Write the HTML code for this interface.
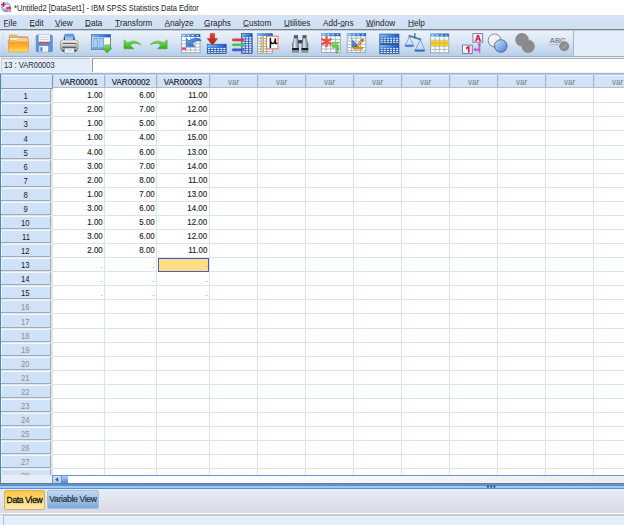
<!DOCTYPE html><html><head><meta charset="utf-8"><style>
*{margin:0;padding:0;box-sizing:border-box}
html,body{width:624px;height:525px;overflow:hidden;background:#fff;font-family:"Liberation Sans",sans-serif;}
.a{position:absolute}
#title{left:0;top:0;width:624px;height:15px;background:#fff}
#ttext{left:14px;top:2.5px;font-size:8.4px;color:#222;white-space:nowrap;transform:scaleX(0.9);transform-origin:0 50%}
#menu{left:0;top:15px;width:624px;height:15px;background:linear-gradient(#d6e5f6,#cddff3);border-bottom:1px solid #77828e}
.mi{font-size:8.2px;color:#1e1e1e;white-space:nowrap}
#tbarea{left:0;top:30px;width:624px;height:27px;background:#e4eefa;border-bottom:1px solid #a3afbb;border-top:1px solid #c8ccd2}
#tb{left:0;top:31px;width:574px;height:25px;background:linear-gradient(#ebf2fa,#dbe7f5 40%,#b7cee9);border-right:1px solid #aab8c6}
.mi u{text-decoration:none;position:relative}
.mi u::after{content:"";position:absolute;left:0;right:0;top:7.5px;height:1px;background:#7a8088}
#refrow{left:0;top:57px;width:624px;height:16px;background:#e8f0fa}
#refbox{left:1px;top:58px;width:89px;height:14px;background:#e3edf9;border-top:1px solid #b9c2cc;border-left:1px solid #c9d2dc}
#reftext{left:4px;top:60px;font-size:8.6px;color:#2a2a2a;white-space:nowrap;transform:scaleX(0.88);transform-origin:0 50%}
#valbox{left:92px;top:58px;width:532px;height:14px;background:#fff;border-top:1px solid #a8b0b8;border-left:1px solid #8e969e}
#blueline{left:0;top:73px;width:624px;height:2px;background:linear-gradient(#8fb3dd,#bcd4ee)}
#leftbar{left:0;top:74px;width:1px;height:411px;background:#4a86c8}
#gridbg{left:1px;top:75px;width:623px;height:400px;background:#fff}
.hc{background:#d2e3f8;border-right:1px solid #a9b1bb;border-bottom:1px solid #b4bcc6;box-shadow:inset 1px 0 0 #d0d7df,inset 0 1px 0 #e9f1fb;text-align:center;color:#1e1e1e;-webkit-text-stroke:0.2px #1e1e1e;font-size:9.6px;line-height:12px;padding-top:1px;white-space:nowrap}
.hc span{display:inline-block;transform:scaleX(0.84)}
.hv{color:#7c7c7c;-webkit-text-stroke:0}
.rh{background:#d0e2f8;border-right:1px solid #a0aab6;border-bottom:1px solid #a0aab6;box-shadow:inset 1px 1px 0 #f2f7fd;text-align:center;color:#1a1a1a;font-size:9.6px}
.rh span{display:inline-block;transform:translateY(0.5px) scaleX(0.8)}
.rhg{color:#8c8c8c}
.gl{background:#d6e4f3}
.rgl{background:#dfe6ee}
.dt{font-size:9.6px;color:#1e1e1e;-webkit-text-stroke:0.15px #1e1e1e;text-align:right;white-space:nowrap;transform:scaleX(0.82);transform-origin:100% 50%;line-height:12px}
.dot{color:#8a8a8a;-webkit-text-stroke:0}
#sel{background:#fddf88;border:1px solid #5558b8}
#hscroll{left:1px;top:475px;width:623px;height:8px;background:linear-gradient(to right,#fff,#fcfcfd 40%,#ededf1);border-top:1px solid #5e9ad8}
#hsleft{left:1px;top:475px;width:52px;height:8px;background:#e6edf6}
#sbtn{left:52px;top:475px;width:10px;height:9px;background:linear-gradient(#cfe2f8,#aecdf2);border:1px solid #5c9ce6}
#sthumb{left:62px;top:475px;width:6px;height:9px;background:linear-gradient(#b4d2f2,#3c7cd2);border-top:1px solid #5c9ce6}
#splitter{left:0;top:483px;width:624px;height:6px;background:linear-gradient(#6c7c8e 0,#6c7c8e 16.6%,#5c92d0 16.6%,#5c92d0 50%,#9ccaf2 50%,#9ccaf2 83.3%,#5e90c8 83.3%)}
#tabs{left:0;top:489px;width:624px;height:25px;background:linear-gradient(#e6eef8,#dad9e5);border-bottom:1px solid #fff}
#tab1{left:4px;top:490px;width:41px;height:20px;background:linear-gradient(#ffc640,#ffe08a 60%,#feeab0);border:1px solid #d4b060;border-radius:2px;font-size:8.5px;color:#111;-webkit-text-stroke:0.3px #111;text-align:center;line-height:19px;letter-spacing:-0.3px;white-space:nowrap}
#tab2{left:47px;top:490px;width:52px;height:19px;background:linear-gradient(#c4d8f0,#7eaad8);border:1px solid #a4c0e0;border-radius:2px;font-size:8.5px;color:#2a3446;-webkit-text-stroke:0.2px #2a3446;text-align:center;line-height:17px;letter-spacing:-0.3px;white-space:nowrap}
#status{left:0;top:514px;width:624px;height:11px;background:#e2eefb;border-top:1px solid #c2c8d0}
#statbox{left:3px;top:515px;width:621px;height:10px;border-top:1px solid #c4ccd6;border-left:1px solid #b8c0ca;background:#e2eefa}
</style></head><body><div class="a" id="title"></div>
<svg class="a" style="left:0;top:0" width="14" height="14" viewBox="0 0 14 14">
<defs><radialGradient id="gIc" cx="0.45" cy="0.4" r="0.6"><stop offset="0" stop-color="#e8f2fc"/><stop offset="0.55" stop-color="#9cc4ec"/><stop offset="1" stop-color="#3a7cc8"/></radialGradient></defs>
<circle cx="6" cy="7.1" r="4.9" fill="url(#gIc)"/>
<path d="M2.6 8.6Q5 5 9.6 5.6" stroke="#ffffff" stroke-width="1.1" fill="none" opacity="0.8"/>
<rect x="1.1" y="3.9" width="4.7" height="1.3" fill="#e0143c"/><rect x="2.8" y="2" width="1.3" height="5" fill="#e0143c"/>
<rect x="6.5" y="7.3" width="4.5" height="4.5" fill="#e46a82"/><rect x="6.5" y="7.3" width="4.5" height="1.4" fill="#d8203c"/>
<path d="M6.5 10.2h4.5M8.7 8.7v3.1" stroke="#f8c8d0" stroke-width="0.5"/>
</svg>
<div class="a" id="ttext">*Untitled2 [DataSet1] - IBM SPSS Statistics Data Editor</div>
<div class="a" id="menu"></div>
<div class="a mi" style="left:3.6px;top:18.5px"><u>F</u>ile</div>
<div class="a mi" style="left:29.5px;top:18.5px"><u>E</u>dit</div>
<div class="a mi" style="left:55px;top:18.5px"><u>V</u>iew</div>
<div class="a mi" style="left:85px;top:18.5px"><u>D</u>ata</div>
<div class="a mi" style="left:115px;top:18.5px"><u>T</u>ransform</div>
<div class="a mi" style="left:164.5px;top:18.5px"><u>A</u>nalyze</div>
<div class="a mi" style="left:204px;top:18.5px"><u>G</u>raphs</div>
<div class="a mi" style="left:243px;top:18.5px"><u>C</u>ustom</div>
<div class="a mi" style="left:284px;top:18.5px"><u>U</u>tilities</div>
<div class="a mi" style="left:323px;top:18.5px">Add-<u>o</u>ns</div>
<div class="a mi" style="left:366px;top:18.5px"><u>W</u>indow</div>
<div class="a mi" style="left:408px;top:18.5px"><u>H</u>elp</div>
<div class="a" id="tbarea"></div>
<div class="a" id="tb"></div>
<svg class="a" style="left:0;top:0" width="624" height="60" viewBox="0 0 624 60"><defs>
<linearGradient id="gFold" x1="0" y1="0" x2="0" y2="1"><stop offset="0" stop-color="#fff4e0"/><stop offset="0.28" stop-color="#ff9a1e"/><stop offset="0.6" stop-color="#ffae2c"/><stop offset="1" stop-color="#fff27a"/></linearGradient>
<linearGradient id="gFoldB" x1="0" y1="0" x2="0" y2="1"><stop offset="0" stop-color="#ffd050"/><stop offset="1" stop-color="#e89010"/></linearGradient>
<linearGradient id="gGreen" x1="0" y1="0" x2="0" y2="1"><stop offset="0" stop-color="#80e45c"/><stop offset="1" stop-color="#34a820"/></linearGradient>
<linearGradient id="gRed" x1="0" y1="0" x2="0" y2="1"><stop offset="0" stop-color="#e04a30"/><stop offset="1" stop-color="#b01a10"/></linearGradient>
<linearGradient id="gPrn" x1="0" y1="0" x2="0" y2="1"><stop offset="0" stop-color="#f6f6f6"/><stop offset="0.5" stop-color="#cdcdcd"/><stop offset="1" stop-color="#8a8a8a"/></linearGradient>
<linearGradient id="gPap" x1="0" y1="0" x2="0" y2="1"><stop offset="0" stop-color="#3a8ae0"/><stop offset="1" stop-color="#e8f4ff"/></linearGradient>
<linearGradient id="gHdr" x1="0" y1="0" x2="0" y2="1"><stop offset="0" stop-color="#9ccaf6"/><stop offset="1" stop-color="#2a70d6"/></linearGradient>
<linearGradient id="gHdrH" x1="0" y1="0" x2="1" y2="0"><stop offset="0" stop-color="#7ab8f4"/><stop offset="1" stop-color="#1a5cc8"/></linearGradient>
<linearGradient id="gBin" x1="0" y1="0" x2="1" y2="0"><stop offset="0" stop-color="#50585e"/><stop offset="0.35" stop-color="#e4e8ec"/><stop offset="0.7" stop-color="#a0a8b0"/><stop offset="1" stop-color="#586068"/></linearGradient>
<linearGradient id="gCir" x1="0" y1="0" x2="1" y2="1"><stop offset="0" stop-color="#d0e2fc"/><stop offset="1" stop-color="#3a78e0"/></linearGradient>
<linearGradient id="gCirW" x1="0" y1="0" x2="1" y2="1"><stop offset="0" stop-color="#ffffff"/><stop offset="1" stop-color="#d8e0ec"/></linearGradient>
<linearGradient id="gPan" x1="0" y1="0" x2="0" y2="1"><stop offset="0" stop-color="#b8dcf8"/><stop offset="0.5" stop-color="#2a68c0"/><stop offset="1" stop-color="#a8d4f4"/></linearGradient>
<linearGradient id="gBlue" x1="0" y1="0" x2="1" y2="1"><stop offset="0" stop-color="#6aacf4"/><stop offset="1" stop-color="#1a56c0"/></linearGradient>
<linearGradient id="gBox" x1="0" y1="0" x2="1" y2="1"><stop offset="0" stop-color="#ffffff"/><stop offset="1" stop-color="#dfe4ec"/></linearGradient>
</defs><rect x="2.6" y="33" width="0.8" height="0.8" fill="#b0bccb"/><rect x="2.6" y="35" width="0.8" height="0.8" fill="#b0bccb"/><rect x="2.6" y="37" width="0.8" height="0.8" fill="#b0bccb"/><rect x="2.6" y="39" width="0.8" height="0.8" fill="#b0bccb"/><rect x="2.6" y="41" width="0.8" height="0.8" fill="#b0bccb"/><rect x="2.6" y="43" width="0.8" height="0.8" fill="#b0bccb"/><rect x="2.6" y="45" width="0.8" height="0.8" fill="#b0bccb"/><rect x="2.6" y="47" width="0.8" height="0.8" fill="#b0bccb"/><rect x="2.6" y="49" width="0.8" height="0.8" fill="#b0bccb"/><rect x="2.6" y="51" width="0.8" height="0.8" fill="#b0bccb"/><rect x="2.6" y="53" width="0.8" height="0.8" fill="#b0bccb"/><path d="M9.3 35.6q0-0.6 0.6-0.6h6.8l1.6 1.8h9.3v4.6H9.3z" fill="url(#gFoldB)" stroke="#d08a30" stroke-width="0.6"/><rect x="9.6" y="37.8" width="17.8" height="3.4" fill="#fbfdff" stroke="#5a8ad0" stroke-width="0.5"/><path d="M8.1 40.2h8.8l1.2-1.2h10.6l-0.5 12.8H8.9z" fill="url(#gFold)" stroke="#e08424" stroke-width="0.6"/><path d="M9.4 46Q15 41.2 22 43.6Q25 45 27.6 48.5V51.2H9.4z" fill="#ffc030" opacity="0.35"/><rect x="36.2" y="35" width="16.2" height="16.8" rx="1.4" fill="#5f94d4" stroke="#4a7ab4" stroke-width="0.5"/><rect x="38.6" y="35" width="11.4" height="7.6" fill="#f3f5f8"/><path d="M39.8 37.3h9M39.8 39.5h9" stroke="#c4c8d0" stroke-width="0.8"/><rect x="38.6" y="41.8" width="11.4" height="1.4" fill="#d8405a"/><rect x="39.2" y="46" width="9" height="5.8" fill="#eef0f3"/><rect x="40.4" y="47.2" width="2" height="4.2" fill="#4a80c4"/><path d="M64.4 41.4V35.4Q64.4 34.2 65.6 34.2H72.8Q74 34.2 74 35.4V41.4Z" fill="url(#gPap)" stroke="#3a74c4" stroke-width="0.5"/><rect x="63.8" y="37.2" width="1.2" height="4.2" fill="#1e3e74"/><rect x="73.4" y="37.2" width="1.2" height="4.2" fill="#1e3e74"/><rect x="60.6" y="40" width="17.4" height="10.8" rx="2.4" fill="url(#gPrn)" stroke="#6a6a6a" stroke-width="0.5"/><rect x="62.6" y="42.8" width="13.4" height="1.2" fill="#6a6a6a"/><rect x="62.6" y="46.6" width="13.4" height="1.4" fill="#5a5a5a"/><rect x="62.4" y="50" width="2.2" height="1.6" fill="#3a3a3a"/><rect x="74" y="50" width="2.2" height="1.6" fill="#3a3a3a"/><path d="M65 48.2h8.8l0.6 4.8H64.4z" fill="#eef6fe" stroke="#8aa4be" stroke-width="0.5"/><path d="M67 50.2h5" stroke="#9ab0c4" stroke-width="0.6"/><rect x="75.4" y="43.4" width="1.6" height="1.4" fill="#3cc03c"/><rect x="91.4" y="34.4" width="19.2" height="15.2" fill="#fff" stroke="#56669a" stroke-width="0.8"/><rect x="91.8" y="34.8" width="18.4" height="2.6" fill="url(#gHdrH)"/><rect x="93" y="38.2" width="4.6" height="9.6" fill="#a8d0f2" stroke="#4a90dc" stroke-width="0.7"/><rect x="99" y="38.2" width="4.6" height="9.6" fill="#a8d0f2" stroke="#4a90dc" stroke-width="0.7"/><rect x="92.2" y="47.6" width="12" height="1.6" fill="#6aa8ea"/><path d="M104.6 44.8h5v3.2h2.1l-4.6 5.1-4.6-5.1h2.1z" fill="url(#gGreen)" stroke="#2a9a1a" stroke-width="0.4"/><path d="M124 39.8L127.8 42.8Q134.6 38.4 141.2 44.8Q134.2 41.4 130.2 45.2L133.8 48.8H124Z" fill="url(#gGreen)" stroke="#3aa82a" stroke-width="0.5"/><path d="M124 39.8L127.8 42.8Q134.6 38.4 141.2 44.8Q134.2 41.4 130.2 45.2L133.8 48.8H124Z" transform="translate(291.2 0) scale(-1 1)" fill="url(#gGreen)" stroke="#3aa82a" stroke-width="0.5"/><rect x="181.4" y="34.2" width="18.6" height="18.6" fill="#fff" stroke="#7c8ca4" stroke-width="0.7"/><line x1="186.2" y1="37.0" x2="186.2" y2="52.800000000000004" stroke="#aab2bc" stroke-width="0.9"/><line x1="190.6" y1="37.0" x2="190.6" y2="52.800000000000004" stroke="#aab2bc" stroke-width="0.9"/><line x1="195.2" y1="37.0" x2="195.2" y2="52.800000000000004" stroke="#aab2bc" stroke-width="0.9"/><line x1="181.4" y1="40.4" x2="200.0" y2="40.4" stroke="#aab2bc" stroke-width="0.9"/><line x1="181.4" y1="43.8" x2="200.0" y2="43.8" stroke="#aab2bc" stroke-width="0.9"/><line x1="181.4" y1="47.2" x2="200.0" y2="47.2" stroke="#aab2bc" stroke-width="0.9"/><line x1="181.4" y1="50" x2="200.0" y2="50" stroke="#aab2bc" stroke-width="0.9"/><rect x="181.4" y="34.2" width="18.6" height="2.8" fill="url(#gHdrH)"/><path d="M182.5 35.1h2.4l-1.2 1.3z" fill="#fff" opacity="0.9"/><path d="M187.29999999999998 35.1h2.4l-1.2 1.3z" fill="#fff" opacity="0.9"/><path d="M191.7 35.1h2.4l-1.2 1.3z" fill="#fff" opacity="0.9"/><path d="M196.29999999999998 35.1h2.4l-1.2 1.3z" fill="#fff" opacity="0.9"/><rect x="182" y="47.6" width="4" height="2.2" fill="#ee4058"/><path d="M186.4 38.4L189 40.8Q194 36.8 199.2 38.6L201.2 40.6L198.8 40.8Q194.6 40.6 192.2 43.4L194.8 46.6H186.4Z" fill="url(#gBlue)" stroke="#1a4aa0" stroke-width="0.5"/><path d="M210.2 33.4h4.4v5.2h3l-5.2 6.6-5.2-6.6h3z" fill="url(#gRed)" stroke="#9a1a10" stroke-width="0.4"/><rect x="207.2" y="44.2" width="19" height="9.4" fill="#2a62c0" stroke="#34487a" stroke-width="0.6"/><rect x="207.5" y="44.5" width="18.4" height="3" fill="url(#gHdrH)"/><rect x="208.00" y="47.95" width="2.07" height="1.03" fill="#f4f8ff"/><rect x="208.00" y="49.88" width="2.07" height="1.03" fill="#f4f8ff"/><rect x="208.00" y="51.82" width="2.07" height="1.03" fill="#f4f8ff"/><rect x="211.07" y="47.95" width="2.07" height="1.03" fill="#f4f8ff"/><rect x="211.07" y="49.88" width="2.07" height="1.03" fill="#f4f8ff"/><rect x="211.07" y="51.82" width="2.07" height="1.03" fill="#f4f8ff"/><rect x="214.13" y="47.95" width="2.07" height="1.03" fill="#f4f8ff"/><rect x="214.13" y="49.88" width="2.07" height="1.03" fill="#f4f8ff"/><rect x="214.13" y="51.82" width="2.07" height="1.03" fill="#f4f8ff"/><rect x="217.20" y="47.95" width="2.07" height="1.03" fill="#f4f8ff"/><rect x="217.20" y="49.88" width="2.07" height="1.03" fill="#f4f8ff"/><rect x="217.20" y="51.82" width="2.07" height="1.03" fill="#f4f8ff"/><rect x="220.27" y="47.95" width="2.07" height="1.03" fill="#f4f8ff"/><rect x="220.27" y="49.88" width="2.07" height="1.03" fill="#f4f8ff"/><rect x="220.27" y="51.82" width="2.07" height="1.03" fill="#f4f8ff"/><rect x="223.33" y="47.95" width="2.07" height="1.03" fill="#f4f8ff"/><rect x="223.33" y="49.88" width="2.07" height="1.03" fill="#f4f8ff"/><rect x="223.33" y="51.82" width="2.07" height="1.03" fill="#f4f8ff"/><rect x="241.6" y="33.5" width="10.6" height="19.8" fill="#2a62c0" stroke="#34487a" stroke-width="0.6"/><rect x="241.9" y="33.8" width="10.0" height="2.8" fill="url(#gHdrH)"/><rect x="242.40" y="37.05" width="2.33" height="1.44" fill="#f4f8ff"/><rect x="242.40" y="39.39" width="2.33" height="1.44" fill="#f4f8ff"/><rect x="242.40" y="41.74" width="2.33" height="1.44" fill="#f4f8ff"/><rect x="242.40" y="44.08" width="2.33" height="1.44" fill="#f4f8ff"/><rect x="242.40" y="46.42" width="2.33" height="1.44" fill="#f4f8ff"/><rect x="242.40" y="48.76" width="2.33" height="1.44" fill="#f4f8ff"/><rect x="242.40" y="51.11" width="2.33" height="1.44" fill="#f4f8ff"/><rect x="245.73" y="37.05" width="2.33" height="1.44" fill="#f4f8ff"/><rect x="245.73" y="39.39" width="2.33" height="1.44" fill="#f4f8ff"/><rect x="245.73" y="41.74" width="2.33" height="1.44" fill="#f4f8ff"/><rect x="245.73" y="44.08" width="2.33" height="1.44" fill="#f4f8ff"/><rect x="245.73" y="46.42" width="2.33" height="1.44" fill="#f4f8ff"/><rect x="245.73" y="48.76" width="2.33" height="1.44" fill="#f4f8ff"/><rect x="245.73" y="51.11" width="2.33" height="1.44" fill="#f4f8ff"/><rect x="249.07" y="37.05" width="2.33" height="1.44" fill="#f4f8ff"/><rect x="249.07" y="39.39" width="2.33" height="1.44" fill="#f4f8ff"/><rect x="249.07" y="41.74" width="2.33" height="1.44" fill="#f4f8ff"/><rect x="249.07" y="44.08" width="2.33" height="1.44" fill="#f4f8ff"/><rect x="249.07" y="46.42" width="2.33" height="1.44" fill="#f4f8ff"/><rect x="249.07" y="48.76" width="2.33" height="1.44" fill="#f4f8ff"/><rect x="249.07" y="51.11" width="2.33" height="1.44" fill="#f4f8ff"/><rect x="232" y="38.6" width="12" height="2.6" rx="1.3" fill="#e03a50"/><rect x="232" y="43.4" width="12" height="2.6" rx="1.3" fill="#48c444"/><rect x="232" y="48.6" width="12" height="2.6" rx="1.3" fill="#4858d0"/><rect x="257.4" y="33.4" width="15.2" height="19.8" fill="#fff" stroke="#7c8ca4" stroke-width="0.7"/><line x1="261" y1="36.0" x2="261" y2="53.2" stroke="#98a4b4" stroke-width="0.9"/><line x1="263.4" y1="36.0" x2="263.4" y2="53.2" stroke="#98a4b4" stroke-width="0.9"/><line x1="266.6" y1="36.0" x2="266.6" y2="53.2" stroke="#98a4b4" stroke-width="0.9"/><line x1="257.4" y1="38.6" x2="272.59999999999997" y2="38.6" stroke="#98a4b4" stroke-width="0.9"/><line x1="257.4" y1="41.2" x2="272.59999999999997" y2="41.2" stroke="#98a4b4" stroke-width="0.9"/><line x1="257.4" y1="43.8" x2="272.59999999999997" y2="43.8" stroke="#98a4b4" stroke-width="0.9"/><line x1="257.4" y1="46.4" x2="272.59999999999997" y2="46.4" stroke="#98a4b4" stroke-width="0.9"/><line x1="257.4" y1="49" x2="272.59999999999997" y2="49" stroke="#98a4b4" stroke-width="0.9"/><line x1="257.4" y1="51.4" x2="272.59999999999997" y2="51.4" stroke="#98a4b4" stroke-width="0.9"/><rect x="257.4" y="33.4" width="15.2" height="2.6" fill="url(#gHdrH)"/><rect x="261.4" y="36.6" width="1.8" height="1.8" fill="#f2c41c"/><rect x="261.4" y="39.2" width="1.8" height="1.8" fill="#f2c41c"/><rect x="261.4" y="41.800000000000004" width="1.8" height="1.8" fill="#f2c41c"/><rect x="261.4" y="44.400000000000006" width="1.8" height="1.8" fill="#f2c41c"/><rect x="261.4" y="47.0" width="1.8" height="1.8" fill="#f2c41c"/><rect x="261.4" y="49.6" width="1.8" height="1.8" fill="#f2c41c"/><rect x="261.4" y="52.0" width="1.8" height="1.8" fill="#f2c41c"/><rect x="266.4" y="36.2" width="11.6" height="12.6" fill="#fff" stroke="#f07a52" stroke-width="1.1"/><path d="M270.4 38.4V47.6M270.4 38.6Q270.2 43.6 272.8 43.6Q275.2 43.6 275.4 38.4V42.6Q275.4 44 276.8 43.4" stroke="#111" stroke-width="1.5" fill="none" stroke-linecap="round"/><rect x="293.8" y="35" width="4.2" height="4" rx="0.8" fill="#5a6068"/><rect x="302.4" y="35" width="4.2" height="4" rx="0.8" fill="#5a6068"/><path d="M293.4 38.6h5v4.4h-5.6z" fill="url(#gBin)"/><path d="M302 38.6h5l0.6 4.4H302z" fill="url(#gBin)"/><rect x="292.2" y="42.6" width="6.6" height="10.2" rx="1" fill="url(#gBin)"/><rect x="301.6" y="42.6" width="6.6" height="10.2" rx="1" fill="url(#gBin)"/><rect x="298.2" y="40.2" width="4" height="3" fill="#30343c"/><rect x="300.4" y="40.2" width="1.4" height="3" fill="#2a3aa0"/><rect x="292.2" y="48" width="6.6" height="2" fill="#1a1c20"/><rect x="301.6" y="48" width="6.6" height="2" fill="#1a1c20"/><rect x="292.6" y="50" width="5.8" height="2.6" fill="#8a8e94"/><rect x="302" y="50" width="5.8" height="2.6" fill="#8a8e94"/><rect x="321.4" y="33.4" width="18.8" height="19.2" fill="#fff" stroke="#7c8ca4" stroke-width="0.7"/><line x1="326" y1="36.199999999999996" x2="326" y2="52.599999999999994" stroke="#aab2bc" stroke-width="0.9"/><line x1="330.6" y1="36.199999999999996" x2="330.6" y2="52.599999999999994" stroke="#aab2bc" stroke-width="0.9"/><line x1="335.4" y1="36.199999999999996" x2="335.4" y2="52.599999999999994" stroke="#aab2bc" stroke-width="0.9"/><line x1="321.4" y1="39.4" x2="340.2" y2="39.4" stroke="#aab2bc" stroke-width="0.9"/><line x1="321.4" y1="42.6" x2="340.2" y2="42.6" stroke="#aab2bc" stroke-width="0.9"/><line x1="321.4" y1="45.8" x2="340.2" y2="45.8" stroke="#aab2bc" stroke-width="0.9"/><line x1="321.4" y1="49" x2="340.2" y2="49" stroke="#aab2bc" stroke-width="0.9"/><rect x="321.4" y="33.4" width="18.8" height="2.8" fill="url(#gHdrH)"/><path d="M322.5 34.3h2.4l-1.2 1.3z" fill="#fff" opacity="0.9"/><path d="M327.1 34.3h2.4l-1.2 1.3z" fill="#fff" opacity="0.9"/><path d="M331.70000000000005 34.3h2.4l-1.2 1.3z" fill="#fff" opacity="0.9"/><path d="M336.5 34.3h2.4l-1.2 1.3z" fill="#fff" opacity="0.9"/><path d="M326.6 37v9.2M322.4 39.2l8.4 4.8M322.4 44l8.4-4.8" stroke="#f24a40" stroke-width="2.2" stroke-linecap="round"/><path d="M332.6 42.2H338.8L337.6 44.2Q340.4 48.2 336.6 53.6Q337.2 48.6 335.2 46.8L332.6 48.6Z" fill="url(#gGreen)" stroke="#2a9a1a" stroke-width="0.4"/><rect x="347.2" y="33.4" width="18.6" height="19.2" fill="#fff" stroke="#7c8ca4" stroke-width="0.7"/><line x1="351.6" y1="36.199999999999996" x2="351.6" y2="52.599999999999994" stroke="#aab2bc" stroke-width="0.9"/><line x1="356.1" y1="36.199999999999996" x2="356.1" y2="52.599999999999994" stroke="#aab2bc" stroke-width="0.9"/><line x1="360.6" y1="36.199999999999996" x2="360.6" y2="52.599999999999994" stroke="#aab2bc" stroke-width="0.9"/><line x1="347.2" y1="38.2" x2="365.8" y2="38.2" stroke="#aab2bc" stroke-width="0.9"/><line x1="347.2" y1="41.2" x2="365.8" y2="41.2" stroke="#aab2bc" stroke-width="0.9"/><line x1="347.2" y1="44.4" x2="365.8" y2="44.4" stroke="#aab2bc" stroke-width="0.9"/><line x1="347.2" y1="47.6" x2="365.8" y2="47.6" stroke="#aab2bc" stroke-width="0.9"/><line x1="347.2" y1="50.6" x2="365.8" y2="50.6" stroke="#aab2bc" stroke-width="0.9"/><rect x="347.2" y="33.4" width="18.6" height="2.8" fill="url(#gHdrH)"/><path d="M348.3 34.3h2.4l-1.2 1.3z" fill="#fff" opacity="0.9"/><path d="M352.70000000000005 34.3h2.4l-1.2 1.3z" fill="#fff" opacity="0.9"/><path d="M357.20000000000005 34.3h2.4l-1.2 1.3z" fill="#fff" opacity="0.9"/><path d="M361.70000000000005 34.3h2.4l-1.2 1.3z" fill="#fff" opacity="0.9"/><path d="M352.2 39.6V47H358.8Z" fill="url(#gBlue)" stroke="#2040a0" stroke-width="0.5"/><path d="M356.8 46.2L362 40.6" stroke="#5a4a20" stroke-width="2.4" stroke-linecap="round"/><path d="M356.8 46.2L362 40.6" stroke="#f0c840" stroke-width="1.4"/><circle cx="362.6" cy="40" r="1.2" fill="#e05040"/><rect x="353" y="47" width="9.8" height="2.2" rx="0.6" fill="#e0a010" stroke="#a87a10" stroke-width="0.4"/><rect x="379.8" y="43.4" width="19.2" height="1.6" fill="#606878"/><rect x="379.8" y="34" width="19.2" height="9.6" fill="#2a62c0" stroke="#34487a" stroke-width="0.6"/><rect x="380.1" y="34.3" width="18.599999999999998" height="3" fill="url(#gHdrH)"/><rect x="380.60" y="37.75" width="2.10" height="1.10" fill="#f4f8ff"/><rect x="380.60" y="39.75" width="2.10" height="1.10" fill="#f4f8ff"/><rect x="380.60" y="41.75" width="2.10" height="1.10" fill="#f4f8ff"/><rect x="383.70" y="37.75" width="2.10" height="1.10" fill="#f4f8ff"/><rect x="383.70" y="39.75" width="2.10" height="1.10" fill="#f4f8ff"/><rect x="383.70" y="41.75" width="2.10" height="1.10" fill="#f4f8ff"/><rect x="386.80" y="37.75" width="2.10" height="1.10" fill="#f4f8ff"/><rect x="386.80" y="39.75" width="2.10" height="1.10" fill="#f4f8ff"/><rect x="386.80" y="41.75" width="2.10" height="1.10" fill="#f4f8ff"/><rect x="389.90" y="37.75" width="2.10" height="1.10" fill="#f4f8ff"/><rect x="389.90" y="39.75" width="2.10" height="1.10" fill="#f4f8ff"/><rect x="389.90" y="41.75" width="2.10" height="1.10" fill="#f4f8ff"/><rect x="393.00" y="37.75" width="2.10" height="1.10" fill="#f4f8ff"/><rect x="393.00" y="39.75" width="2.10" height="1.10" fill="#f4f8ff"/><rect x="393.00" y="41.75" width="2.10" height="1.10" fill="#f4f8ff"/><rect x="396.10" y="37.75" width="2.10" height="1.10" fill="#f4f8ff"/><rect x="396.10" y="39.75" width="2.10" height="1.10" fill="#f4f8ff"/><rect x="396.10" y="41.75" width="2.10" height="1.10" fill="#f4f8ff"/><rect x="379.8" y="44.6" width="19.2" height="9.2" fill="#2a62c0" stroke="#34487a" stroke-width="0.6"/><rect x="380.1" y="44.9" width="18.599999999999998" height="2.8" fill="url(#gHdrH)"/><rect x="380.60" y="48.15" width="2.10" height="1.03" fill="#f4f8ff"/><rect x="380.60" y="50.08" width="2.10" height="1.03" fill="#f4f8ff"/><rect x="380.60" y="52.02" width="2.10" height="1.03" fill="#f4f8ff"/><rect x="383.70" y="48.15" width="2.10" height="1.03" fill="#f4f8ff"/><rect x="383.70" y="50.08" width="2.10" height="1.03" fill="#f4f8ff"/><rect x="383.70" y="52.02" width="2.10" height="1.03" fill="#f4f8ff"/><rect x="386.80" y="48.15" width="2.10" height="1.03" fill="#f4f8ff"/><rect x="386.80" y="50.08" width="2.10" height="1.03" fill="#f4f8ff"/><rect x="386.80" y="52.02" width="2.10" height="1.03" fill="#f4f8ff"/><rect x="389.90" y="48.15" width="2.10" height="1.03" fill="#f4f8ff"/><rect x="389.90" y="50.08" width="2.10" height="1.03" fill="#f4f8ff"/><rect x="389.90" y="52.02" width="2.10" height="1.03" fill="#f4f8ff"/><rect x="393.00" y="48.15" width="2.10" height="1.03" fill="#f4f8ff"/><rect x="393.00" y="50.08" width="2.10" height="1.03" fill="#f4f8ff"/><rect x="393.00" y="52.02" width="2.10" height="1.03" fill="#f4f8ff"/><rect x="396.10" y="48.15" width="2.10" height="1.03" fill="#f4f8ff"/><rect x="396.10" y="50.08" width="2.10" height="1.03" fill="#f4f8ff"/><rect x="396.10" y="52.02" width="2.10" height="1.03" fill="#f4f8ff"/><path d="M414.8 33.2V38.4" stroke="#4a7aa0" stroke-width="1.5"/><path d="M408.6 35.6L421.2 39.6" stroke="#4a7aa0" stroke-width="1.7"/><path d="M409.4 36.8L405 45.6M409.4 36.8L413.6 45.6M420.6 39.6L415 50.4M420.6 39.6L424.6 50.4" stroke="#5a7a98" stroke-width="0.6"/><ellipse cx="409.3" cy="45.8" rx="4.6" ry="1.8" fill="url(#gPan)"/><ellipse cx="419.7" cy="50.6" rx="5.2" ry="2" fill="url(#gPan)"/><rect x="430.4" y="33.8" width="18.4" height="19" fill="#fff" stroke="#7c8ca4" stroke-width="0.7"/><line x1="435" y1="36.599999999999994" x2="435" y2="52.8" stroke="#aab2bc" stroke-width="0.9"/><line x1="439.6" y1="36.599999999999994" x2="439.6" y2="52.8" stroke="#aab2bc" stroke-width="0.9"/><line x1="444.2" y1="36.599999999999994" x2="444.2" y2="52.8" stroke="#aab2bc" stroke-width="0.9"/><line x1="430.4" y1="40.2" x2="448.79999999999995" y2="40.2" stroke="#aab2bc" stroke-width="0.9"/><line x1="430.4" y1="43.2" x2="448.79999999999995" y2="43.2" stroke="#aab2bc" stroke-width="0.9"/><line x1="430.4" y1="46.2" x2="448.79999999999995" y2="46.2" stroke="#aab2bc" stroke-width="0.9"/><line x1="430.4" y1="49.4" x2="448.79999999999995" y2="49.4" stroke="#aab2bc" stroke-width="0.9"/><rect x="430.4" y="33.8" width="18.4" height="2.8" fill="url(#gHdrH)"/><path d="M431.5 34.699999999999996h2.4l-1.2 1.3z" fill="#fff" opacity="0.9"/><path d="M436.1 34.699999999999996h2.4l-1.2 1.3z" fill="#fff" opacity="0.9"/><path d="M440.70000000000005 34.699999999999996h2.4l-1.2 1.3z" fill="#fff" opacity="0.9"/><path d="M445.3 34.699999999999996h2.4l-1.2 1.3z" fill="#fff" opacity="0.9"/><rect x="430.8" y="40.6" width="17.6" height="5.4" fill="#fad21a"/><path d="M430.8 43.2h17.6M435 40.6v5.4M439.6 40.6v5.4M444.2 40.6v5.4" stroke="#c8b060" stroke-width="0.7"/><rect x="472.9" y="33.6" width="9.8" height="8.6" fill="url(#gBox)" stroke="#6a7a94" stroke-width="0.9"/><path fill-rule="evenodd" d="M474.9 41.2L477.1 34.8H478.9L481.1 41.2H479.4L478.9 39.7H477.1L476.6 41.2ZM477.5 38.4H478.5L478 36.6Z" fill="#e8185a"/><rect x="462.5" y="45.1" width="9.8" height="8.4" fill="url(#gBox)" stroke="#6a7a94" stroke-width="0.9"/><path d="M465.6 47.8L468.2 46H469.6V52.4H467.9V48.4L466.3 49.3Z" fill="#e8185a"/><path d="M474 49.6h5.4M479.4 52.8V43.8" stroke="#c058c8" stroke-width="1.8" fill="none"/><path d="M473.2 49.6L475.6 47.8V51.4Z M479.4 42.6L477.4 45H481.4Z" fill="#c058c8"/><circle cx="494.6" cy="40.4" r="6.4" fill="url(#gCirW)" stroke="#5a6270" stroke-width="0.7"/><circle cx="500.8" cy="46" r="6.3" fill="url(#gCir)" stroke="#3a4660" stroke-width="0.7" fill-opacity="0.92"/><circle cx="522" cy="39.8" r="6.8" fill="#8c8c8c"/><circle cx="528.2" cy="46.4" r="6.4" fill="#8a8a8a" stroke="#9a9a9a" stroke-width="0.5"/><text x="549.6" y="42.6" font-family="Liberation Sans" font-weight="bold" font-size="7.6" fill="#8a8a8a" letter-spacing="-0.3">ABC</text><path d="M549 44.6h10" stroke="#9a9a9a" stroke-width="0.8" stroke-dasharray="1 0.4"/><circle cx="564.2" cy="46.2" r="5" fill="#8c8c8c"/><path d="M562 45.8L564 48L566.4 44" stroke="#a8a8a8" stroke-width="1" fill="none"/></svg>
<div class="a" id="refrow"></div><div class="a" id="refbox"></div><div class="a" id="reftext">13 : VAR00003</div><div class="a" id="valbox"></div>
<div class="a" id="blueline"></div>
<div class="a" id="gridbg"></div>
<div class="a gl" style="left:104px;top:88px;width:1px;height:387px"></div>
<div class="a gl" style="left:156px;top:88px;width:1px;height:387px"></div>
<div class="a gl" style="left:209px;top:88px;width:1px;height:387px"></div>
<div class="a gl" style="left:257px;top:88px;width:1px;height:387px"></div>
<div class="a gl" style="left:305px;top:88px;width:1px;height:387px"></div>
<div class="a gl" style="left:353px;top:88px;width:1px;height:387px"></div>
<div class="a gl" style="left:401px;top:88px;width:1px;height:387px"></div>
<div class="a gl" style="left:449px;top:88px;width:1px;height:387px"></div>
<div class="a gl" style="left:497px;top:88px;width:1px;height:387px"></div>
<div class="a gl" style="left:545px;top:88px;width:1px;height:387px"></div>
<div class="a gl" style="left:593px;top:88px;width:1px;height:387px"></div>
<div class="a gl" style="left:641px;top:88px;width:1px;height:387px"></div>
<div class="a gl" style="left:51px;top:102px;width:573px;height:1px"></div>
<div class="a gl" style="left:51px;top:116px;width:573px;height:1px"></div>
<div class="a gl" style="left:51px;top:130px;width:573px;height:1px"></div>
<div class="a gl" style="left:51px;top:145px;width:573px;height:1px"></div>
<div class="a gl" style="left:51px;top:159px;width:573px;height:1px"></div>
<div class="a gl" style="left:51px;top:173px;width:573px;height:1px"></div>
<div class="a gl" style="left:51px;top:187px;width:573px;height:1px"></div>
<div class="a gl" style="left:51px;top:201px;width:573px;height:1px"></div>
<div class="a gl" style="left:51px;top:215px;width:573px;height:1px"></div>
<div class="a gl" style="left:51px;top:229px;width:573px;height:1px"></div>
<div class="a gl" style="left:51px;top:243px;width:573px;height:1px"></div>
<div class="a gl" style="left:51px;top:257px;width:573px;height:1px"></div>
<div class="a gl" style="left:51px;top:271px;width:573px;height:1px"></div>
<div class="a gl" style="left:51px;top:285px;width:573px;height:1px"></div>
<div class="a gl" style="left:51px;top:299px;width:573px;height:1px"></div>
<div class="a gl" style="left:51px;top:313px;width:573px;height:1px"></div>
<div class="a gl" style="left:51px;top:328px;width:573px;height:1px"></div>
<div class="a gl" style="left:51px;top:342px;width:573px;height:1px"></div>
<div class="a gl" style="left:51px;top:356px;width:573px;height:1px"></div>
<div class="a gl" style="left:51px;top:370px;width:573px;height:1px"></div>
<div class="a gl" style="left:51px;top:384px;width:573px;height:1px"></div>
<div class="a gl" style="left:51px;top:398px;width:573px;height:1px"></div>
<div class="a gl" style="left:51px;top:412px;width:573px;height:1px"></div>
<div class="a gl" style="left:51px;top:426px;width:573px;height:1px"></div>
<div class="a gl" style="left:51px;top:440px;width:573px;height:1px"></div>
<div class="a gl" style="left:51px;top:454px;width:573px;height:1px"></div>
<div class="a gl" style="left:51px;top:468px;width:573px;height:1px"></div>
<div class="a rgl" style="left:1px;top:88px;width:52px;height:387px"></div>
<div class="a hc" style="left:1px;top:75px;width:52px;height:14px;border-bottom:1px solid #8c98a6;border-right:1px solid #8c98a6"></div>
<div class="a hc" style="left:53px;top:75px;width:52px;height:13px"><span>VAR00001</span></div>
<div class="a hc" style="left:105px;top:75px;width:52px;height:13px"><span>VAR00002</span></div>
<div class="a hc" style="left:157px;top:75px;width:53px;height:13px"><span>VAR00003</span></div>
<div class="a hc hv" style="left:210px;top:75px;width:48px;height:13px"><span>var</span></div>
<div class="a hc hv" style="left:258px;top:75px;width:48px;height:13px"><span>var</span></div>
<div class="a hc hv" style="left:306px;top:75px;width:48px;height:13px"><span>var</span></div>
<div class="a hc hv" style="left:354px;top:75px;width:48px;height:13px"><span>var</span></div>
<div class="a hc hv" style="left:402px;top:75px;width:48px;height:13px"><span>var</span></div>
<div class="a hc hv" style="left:450px;top:75px;width:48px;height:13px"><span>var</span></div>
<div class="a hc hv" style="left:498px;top:75px;width:48px;height:13px"><span>var</span></div>
<div class="a hc hv" style="left:546px;top:75px;width:48px;height:13px"><span>var</span></div>
<div class="a hc hv" style="left:594px;top:75px;width:48px;height:13px"><span>var</span></div>
<div class="a rh" style="left:1px;top:89px;width:50px;height:13px;line-height:12px"><span>1</span></div>
<div class="a dt" style="right:521.5px;top:89px">1.00</div>
<div class="a dt" style="right:469.5px;top:89px">6.00</div>
<div class="a dt" style="right:416.5px;top:89px">11.00</div>
<div class="a rh" style="left:1px;top:103px;width:50px;height:13px;line-height:12px"><span>2</span></div>
<div class="a dt" style="right:521.5px;top:103px">2.00</div>
<div class="a dt" style="right:469.5px;top:103px">7.00</div>
<div class="a dt" style="right:416.5px;top:103px">12.00</div>
<div class="a rh" style="left:1px;top:117px;width:50px;height:13px;line-height:12px"><span>3</span></div>
<div class="a dt" style="right:521.5px;top:117px">1.00</div>
<div class="a dt" style="right:469.5px;top:117px">5.00</div>
<div class="a dt" style="right:416.5px;top:117px">14.00</div>
<div class="a rh" style="left:1px;top:131px;width:50px;height:14px;line-height:13px"><span>4</span></div>
<div class="a dt" style="right:521.5px;top:131px">1.00</div>
<div class="a dt" style="right:469.5px;top:131px">4.00</div>
<div class="a dt" style="right:416.5px;top:131px">15.00</div>
<div class="a rh" style="left:1px;top:146px;width:50px;height:13px;line-height:12px"><span>5</span></div>
<div class="a dt" style="right:521.5px;top:146px">4.00</div>
<div class="a dt" style="right:469.5px;top:146px">6.00</div>
<div class="a dt" style="right:416.5px;top:146px">13.00</div>
<div class="a rh" style="left:1px;top:160px;width:50px;height:13px;line-height:12px"><span>6</span></div>
<div class="a dt" style="right:521.5px;top:160px">3.00</div>
<div class="a dt" style="right:469.5px;top:160px">7.00</div>
<div class="a dt" style="right:416.5px;top:160px">14.00</div>
<div class="a rh" style="left:1px;top:174px;width:50px;height:13px;line-height:12px"><span>7</span></div>
<div class="a dt" style="right:521.5px;top:174px">2.00</div>
<div class="a dt" style="right:469.5px;top:174px">8.00</div>
<div class="a dt" style="right:416.5px;top:174px">11.00</div>
<div class="a rh" style="left:1px;top:188px;width:50px;height:13px;line-height:12px"><span>8</span></div>
<div class="a dt" style="right:521.5px;top:188px">1.00</div>
<div class="a dt" style="right:469.5px;top:188px">7.00</div>
<div class="a dt" style="right:416.5px;top:188px">13.00</div>
<div class="a rh" style="left:1px;top:202px;width:50px;height:13px;line-height:12px"><span>9</span></div>
<div class="a dt" style="right:521.5px;top:202px">3.00</div>
<div class="a dt" style="right:469.5px;top:202px">6.00</div>
<div class="a dt" style="right:416.5px;top:202px">14.00</div>
<div class="a rh" style="left:1px;top:216px;width:50px;height:13px;line-height:12px"><span>10</span></div>
<div class="a dt" style="right:521.5px;top:216px">1.00</div>
<div class="a dt" style="right:469.5px;top:216px">5.00</div>
<div class="a dt" style="right:416.5px;top:216px">12.00</div>
<div class="a rh" style="left:1px;top:230px;width:50px;height:13px;line-height:12px"><span>11</span></div>
<div class="a dt" style="right:521.5px;top:230px">3.00</div>
<div class="a dt" style="right:469.5px;top:230px">6.00</div>
<div class="a dt" style="right:416.5px;top:230px">12.00</div>
<div class="a rh" style="left:1px;top:244px;width:50px;height:13px;line-height:12px"><span>12</span></div>
<div class="a dt" style="right:521.5px;top:244px">2.00</div>
<div class="a dt" style="right:469.5px;top:244px">8.00</div>
<div class="a dt" style="right:416.5px;top:244px">11.00</div>
<div class="a rh" style="left:1px;top:258px;width:50px;height:13px;line-height:12px"><span>13</span></div>
<div class="a dt dot" style="right:521.5px;top:258.5px">.</div>
<div class="a dt dot" style="right:469.5px;top:258.5px">.</div>
<div class="a dt dot" style="right:416.5px;top:258.5px">.</div>
<div class="a rh" style="left:1px;top:272px;width:50px;height:13px;line-height:12px"><span>14</span></div>
<div class="a dt dot" style="right:521.5px;top:272.5px">.</div>
<div class="a dt dot" style="right:469.5px;top:272.5px">.</div>
<div class="a dt dot" style="right:416.5px;top:272.5px">.</div>
<div class="a rh" style="left:1px;top:286px;width:50px;height:13px;line-height:12px"><span>15</span></div>
<div class="a dt dot" style="right:521.5px;top:286.5px">.</div>
<div class="a dt dot" style="right:469.5px;top:286.5px">.</div>
<div class="a dt dot" style="right:416.5px;top:286.5px">.</div>
<div class="a rh rhg" style="left:1px;top:300px;width:50px;height:13px;line-height:12px"><span>16</span></div>
<div class="a rh rhg" style="left:1px;top:314px;width:50px;height:14px;line-height:13px"><span>17</span></div>
<div class="a rh rhg" style="left:1px;top:329px;width:50px;height:13px;line-height:12px"><span>18</span></div>
<div class="a rh rhg" style="left:1px;top:343px;width:50px;height:13px;line-height:12px"><span>19</span></div>
<div class="a rh rhg" style="left:1px;top:357px;width:50px;height:13px;line-height:12px"><span>20</span></div>
<div class="a rh rhg" style="left:1px;top:371px;width:50px;height:13px;line-height:12px"><span>21</span></div>
<div class="a rh rhg" style="left:1px;top:385px;width:50px;height:13px;line-height:12px"><span>22</span></div>
<div class="a rh rhg" style="left:1px;top:399px;width:50px;height:13px;line-height:12px"><span>23</span></div>
<div class="a rh rhg" style="left:1px;top:413px;width:50px;height:13px;line-height:12px"><span>24</span></div>
<div class="a rh rhg" style="left:1px;top:427px;width:50px;height:13px;line-height:12px"><span>25</span></div>
<div class="a rh rhg" style="left:1px;top:441px;width:50px;height:13px;line-height:12px"><span>26</span></div>
<div class="a rh rhg" style="left:1px;top:455px;width:50px;height:13px;line-height:12px"><span>27</span></div>
<div class="a rh rhg" style="left:1px;top:469px;width:50px;height:13px;line-height:12px"><span>28</span></div>
<div class="a" id="sel" style="left:158px;top:258px;width:51px;height:14px"></div>
<div class="a dt dot" style="right:416.5px;top:257.5px">.</div>
<div class="a" id="hscroll"></div><div class="a" id="hsleft"></div><div class="a" id="sbtn"></div><div class="a" id="sthumb"></div>
<div class="a" id="leftbar"></div>
<div class="a" id="splitter"></div>
<svg class="a" style="left:0;top:470px" width="624" height="25" viewBox="0 470 624 25"><path d="M55.2 479.6L58.2 477.2V482Z" fill="#555"/><rect x="487" y="485.6" width="2" height="2" fill="#2c4a7a"/><rect x="490.2" y="485.6" width="2" height="2" fill="#2c4a7a"/><rect x="493.4" y="485.6" width="2" height="2" fill="#2c4a7a"/></svg>
<div class="a" id="tabs"></div>
<div class="a" id="tab1">Data View</div><div class="a" id="tab2">Variable View</div>
<div class="a" id="status"></div><div class="a" id="statbox"></div></body></html>
